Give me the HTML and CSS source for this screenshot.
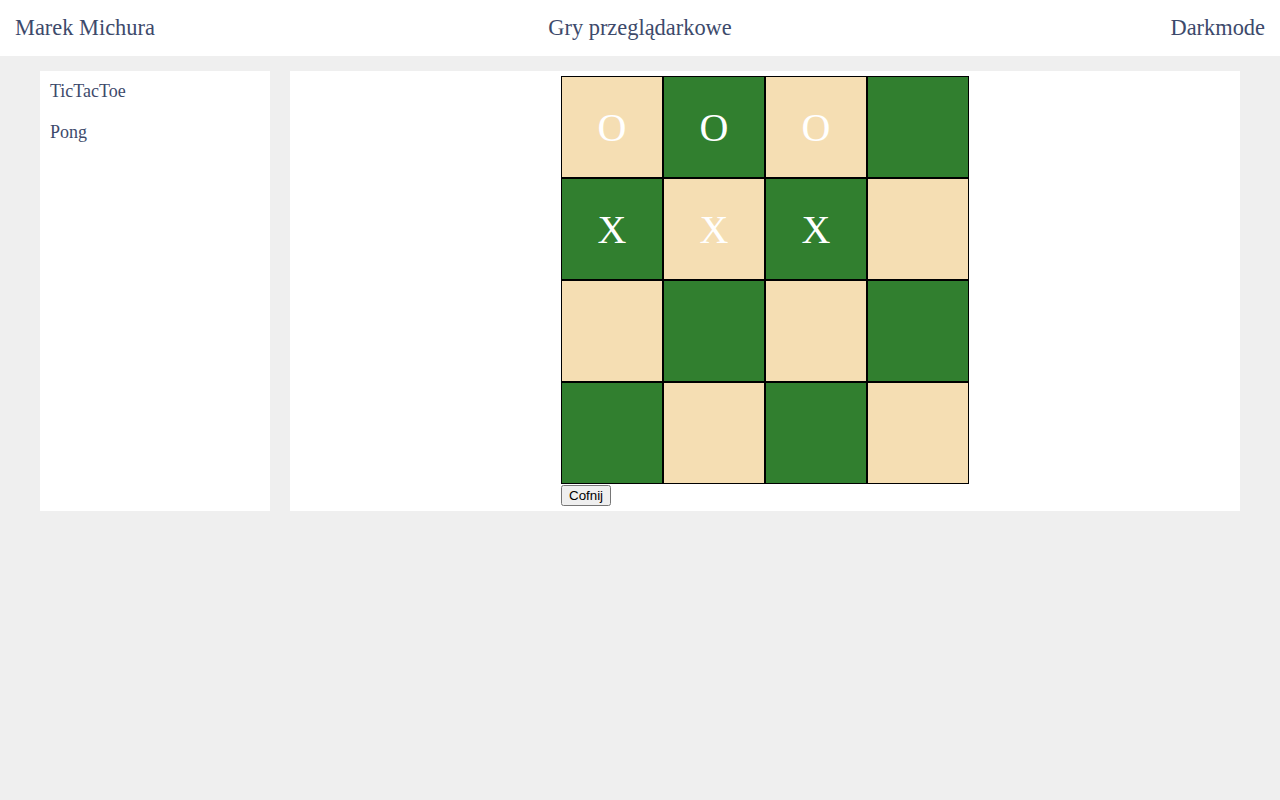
FILE: index.html
```html
<!DOCTYPE html>
<html lang="pl">
<head>
<meta charset="utf-8">
<title>Gry przeglądarkowe</title>
<link rel="stylesheet" href="styles.css">
</head>
<body>
<header class="topbar">
  <span class="brand">Marek Michura</span>
  <span class="title">Gry przeglądarkowe</span>
  <span class="mode">Darkmode</span>
</header>
<div class="content">
  <nav class="sidebar">
    <a class="nav-link">TicTacToe</a>
    <a class="nav-link">Pong</a>
  </nav>
  <main class="main">
    <div class="game">
      <div class="board">
        <div class="cell light">O</div>
        <div class="cell dark">O</div>
        <div class="cell light">O</div>
        <div class="cell dark"></div>
        <div class="cell dark">X</div>
        <div class="cell light">X</div>
        <div class="cell dark">X</div>
        <div class="cell light"></div>
        <div class="cell light"></div>
        <div class="cell dark"></div>
        <div class="cell light"></div>
        <div class="cell dark"></div>
        <div class="cell dark"></div>
        <div class="cell light"></div>
        <div class="cell dark"></div>
        <div class="cell light"></div>
      </div>
      <button class="undo">Cofnij</button>
    </div>
  </main>
</div>
</body>
</html>
```

FILE: styles.css
```css
html, body {
  margin: 0;
  padding: 0;
}
body {
  background: #efefef;
  font-family: "Liberation Serif", "Times New Roman", serif;
  color: #3d4a6b;
  min-height: 800px;
}
.topbar {
  height: 56px;
  background: #ffffff;
  display: grid;
  grid-template-columns: 1fr auto 1fr;
  align-items: center;
  padding: 0 15px;
  font-size: 22.4px;
}
.brand {
  justify-self: start;
}
.title {
  justify-self: center;
}
.mode {
  justify-self: end;
}
.content {
  display: flex;
  gap: 20px;
  padding: 15px 40px;
  align-items: stretch;
}
.sidebar {
  width: 230px;
  background: #ffffff;
  padding: 9px 10px;
  box-sizing: border-box;
  display: flex;
  flex-direction: column;
  gap: 19px;
}
.nav-link {
  font-size: 18px;
  line-height: 22px;
  color: #3d4a6b;
}
.main {
  flex: 1;
  background: #ffffff;
  padding: 5px;
  display: flex;
  justify-content: center;
}
.game {
  display: flex;
  flex-direction: column;
  align-items: flex-start;
  gap: 1px;
}
.board {
  display: grid;
  grid-template-columns: repeat(4, 102px);
  grid-auto-rows: 102px;
}
.cell {
  box-sizing: border-box;
  border: 1px solid #000000;
  display: flex;
  align-items: center;
  justify-content: center;
  color: #ffffff;
  font-size: 40px;
  font-family: "Liberation Serif", "Times New Roman", serif;
}
.light {
  background: #f5deb3;
}
.dark {
  background: #317f2f;
}
.undo {
  font-family: "Liberation Sans", Arial, sans-serif;
  font-size: 13.33px;
  height: 21px;
  padding: 1px 6px;
  margin: 0;
  color: #000000;
}
```
